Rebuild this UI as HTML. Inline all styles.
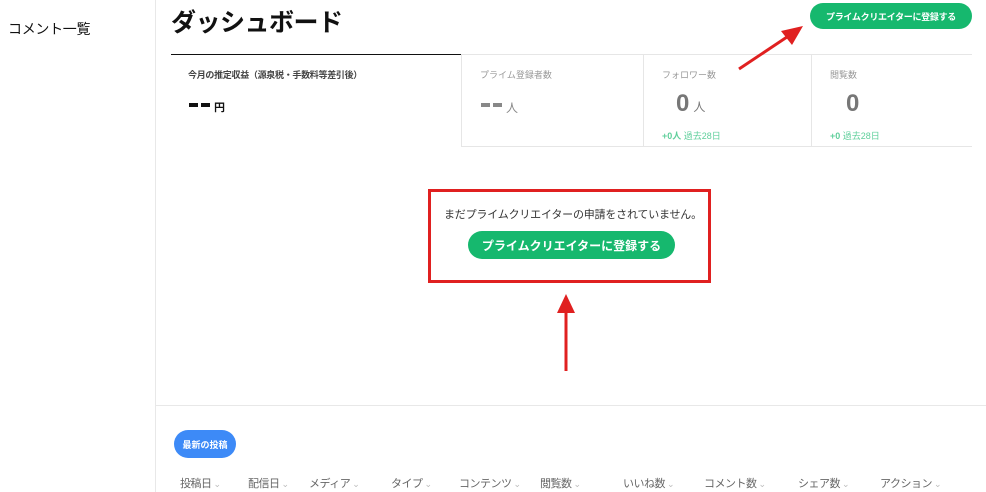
<!DOCTYPE html>
<html><head><meta charset="utf-8"><style>
*{margin:0;padding:0;box-sizing:border-box}
body{width:986px;height:492px;overflow:hidden;background:#fff;font-family:"Liberation Sans","Noto Sans CJK JP",sans-serif;position:relative;color:#222}
.a{position:absolute;white-space:nowrap}
.btn{position:absolute;background:#16b86e;color:#fff;font-weight:bold;display:flex;align-items:center;justify-content:center;white-space:nowrap}
.tab{position:absolute;top:54px;height:93px;border-top:1px solid #e6e6e6;border-right:1px solid #e6e6e6;border-bottom:1px solid #e6e6e6}
.lbl{position:absolute;font-size:10px;color:#999;top:13px}
.big{position:absolute;font-size:24px;font-weight:bold;color:#777}
.unit{font-size:12px;font-weight:normal;margin-left:4px}
.grn{position:absolute;font-size:9px;color:#5fcf9b;top:74px}
.col{position:absolute;top:475px;font-size:11px;color:#666;letter-spacing:-0.5px}
.col:after{content:" ⌄";font-size:9px;color:#bbb}
.dash{position:absolute;height:4px;width:9px}
</style></head><body>
<div class="a" style="left:8px;top:19px;font-size:14px;color:#111;letter-spacing:-0.3px">コメント一覧</div>
<div class="a" style="left:155px;top:0;width:1px;height:492px;background:#e8e8e8"></div>
<div class="a" style="left:171px;top:3px;font-size:25px;font-weight:bold;color:#111;letter-spacing:-0.5px">ダッシュボード</div>
<div class="btn" style="left:810px;top:3px;width:162px;height:26px;font-size:9px;border-radius:13px;letter-spacing:-0.3px">プライムクリエイターに登録する</div>

<div class="tab" style="left:171px;width:290px;border-top:1px solid #111;border-right:none;border-bottom:none">
 <div class="lbl" style="left:17px;color:#444;font-weight:bold;font-size:9px;letter-spacing:-0.3px">今月の推定収益（源泉税・手数料等差引後）</div>
 <div class="dash" style="left:18px;top:48px;background:#111"></div>
 <div class="dash" style="left:30px;top:48px;background:#111"></div>
 <div class="a" style="left:43px;top:44px;font-size:11px;font-weight:bold;color:#111">円</div>
</div>
<div class="tab" style="left:461px;width:183px;border-left:1px solid #e6e6e6">
 <div class="lbl" style="left:18px;font-size:9px">プライム登録者数</div>
 <div class="dash" style="left:19px;top:48px;background:#888"></div>
 <div class="dash" style="left:31px;top:48px;background:#888"></div>
 <div class="a" style="left:44px;top:44px;font-size:12px;color:#888">人</div>
</div>
<div class="tab" style="left:644px;width:168px">
 <div class="lbl" style="left:18px;font-size:9px">フォロワー数</div>
 <div class="big" style="left:32px;top:35px">0<span class="unit">人</span></div>
 <div class="grn" style="left:18px"><b>+0人</b> 過去28日</div>
</div>
<div class="tab" style="left:812px;width:160px;border-right:none">
 <div class="lbl" style="left:18px;font-size:9px">閲覧数</div>
 <div class="big" style="left:34px;top:35px">0</div>
 <div class="grn" style="left:18px"><b>+0</b> 過去28日</div>
</div>

<div class="a" style="left:428px;top:189px;width:283px;height:94px;border:3px solid #e02020"></div>
<div class="a" style="left:444px;top:206px;font-size:11px;color:#333;letter-spacing:-0.2px">まだプライムクリエイターの申請をされていません。</div>
<div class="btn" style="left:468px;top:231px;width:207px;height:28px;font-size:12px;border-radius:14px">プライムクリエイターに登録する</div>

<svg class="a" style="left:0;top:0" width="986" height="492">
<line x1="739" y1="69" x2="790" y2="35" stroke="#e02020" stroke-width="3"/>
<polygon points="803,26 781,31 792,45" fill="#e02020"/>
<line x1="566" y1="371" x2="566" y2="310" stroke="#e02020" stroke-width="3"/>
<polygon points="566,294 557,313 575,313" fill="#e02020"/>
</svg>

<div class="a" style="left:155px;top:405px;width:831px;height:1px;background:#e8e8e8"></div>
<div class="btn" style="left:174px;top:430px;width:62px;height:28px;font-size:9px;background:#3d8af7;border-radius:14px">最新の投稿</div>
<div class="col" style="left:180px">投稿日</div>
<div class="col" style="left:248px">配信日</div>
<div class="col" style="left:309px">メディア</div>
<div class="col" style="left:391px">タイプ</div>
<div class="col" style="left:459px">コンテンツ</div>
<div class="col" style="left:540px">閲覧数</div>
<div class="col" style="left:623px">いいね数</div>
<div class="col" style="left:704px">コメント数</div>
<div class="col" style="left:798px">シェア数</div>
<div class="col" style="left:880px">アクション</div>
</body></html>
